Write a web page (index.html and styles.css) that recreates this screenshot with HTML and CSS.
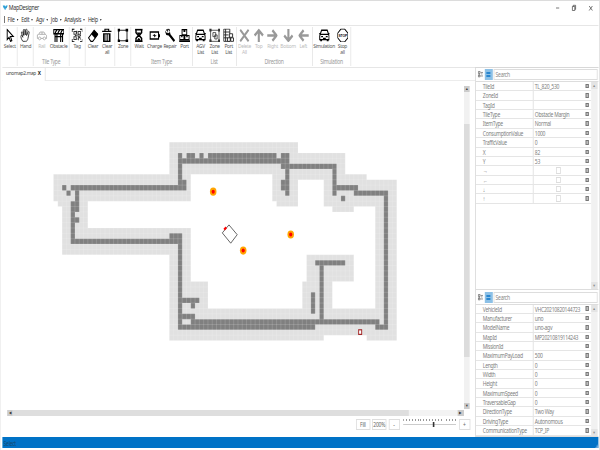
FILE: index.html
```html
<!DOCTYPE html>
<html lang="en">
<head>
<meta charset="utf-8">
<title>MapDesigner</title>
<link rel="stylesheet" href="styles.css">
</head>
<body>
<svg width="0" height="0" class="defs">
  <defs>
    <symbol id="select" viewBox="0 0 24 24"><path d="M6 2v17l4-4 3 7 3-1.300-3-7h6z" fill="#fff" stroke="#000" stroke-width="2"/></symbol>
    <symbol id="hand" viewBox="0 0 24 24"><path d="M7 22C4 19 2 14 3 12c1-1.500 3 1 4 3L4 7c0-2 2-2 3 0l2 5L8 3c0-2 3-2 3 0l1 8 1-9c1-2 3-1 3 1l-1 9 3-6c1-2 3-1 2.500 1L18 17c-1 3-2 5-5 5z" fill="#fff" stroke="#111" stroke-width="1.500"/></symbol>
    <symbol id="car" viewBox="0 0 24 24"><path d="M2 11l3-1 3-4h8l3 4 3 2v5H2zM6 10h13M12 6v4" fill="none" stroke="currentColor" stroke-width="1.700"/><circle cx="7" cy="17" r="2.500" fill="#fff" stroke="currentColor" stroke-width="1.500"/><circle cx="17" cy="17" r="2.500" fill="#fff" stroke="currentColor" stroke-width="1.500"/></symbol>
    <symbol id="obstacle" viewBox="0 0 24 24"><path d="M1 2h22v7H1zM4 9v14M8 9v14M16 9v14M20 9v14M4 14h16" fill="none" stroke="#000" stroke-width="2.400"/><path d="M4 8l4-6M10 8l4-6M16 8l4-6" stroke="#000" stroke-width="2.500"/></symbol>
    <symbol id="tag" viewBox="0 0 24 24"><path d="M1 6V1h5M18 1h5v5M23 18v5h-5M6 23H1v-5" fill="none" stroke="#000" stroke-width="2"/><path d="M5 5h5v5H5zM14 5h5v5h-5zM5 14h5v5H5zM12 11h2v3h4v2h-3v4M11 4v5M7 12h4M17 12h3M12 17v2M18 18h2" fill="none" stroke="#333" stroke-width="1.800"/></symbol>
    <symbol id="eraser" viewBox="0 0 24 24"><path d="M2 16L14 3l8 7-11 12H7z" fill="#fff" stroke="#000" stroke-width="2"/><path d="M8 10l6-7 8 7-6 7z" fill="#000"/></symbol>
    <symbol id="trash" viewBox="0 0 24 24"><path d="M2 5h20M8 5V1h8v4" fill="none" stroke="#000" stroke-width="2.400"/><path d="M4 8h16v15H4z"/><path d="M8.500 10v11M12 10v11M15.500 10v11" stroke="#fff" stroke-width="1.600"/></symbol>
    <symbol id="zone" viewBox="0 0 24 24"><path d="M3 3h18v18H3z" fill="none" stroke="#000" stroke-width="1.600"/><path d="M0 0h6v5H0zM18 0h6v5h-6zM0 19h6v5H0zM18 19h6v5h-6z"/></symbol>
    <symbol id="wait" viewBox="0 0 24 24"><path d="M4 2h16M4 22h16M6 2v5l5 5-5 5v5M18 2v5l-5 5 5 5v5" fill="none" stroke="#000" stroke-width="3"/><path d="M8 7h8l-4 5zM7 21l5-5 5 5z"/></symbol>
    <symbol id="charge" viewBox="0 0 24 24"><path d="M2 6h18v12H2z" fill="none" stroke="#000" stroke-width="2.400"/><path d="M21 10h3v5h-3zM7 12l6-3-1 2.500h4L10 16l1-3z"/></symbol>
    <symbol id="repair" viewBox="0 0 24 24"><path d="M2 3l4 1 2 4 4-2-1-5c-3-1-6 0-8 2zM7 1l5 5 1 4 10 10-3 3L9 12l-5-1-3-7 5 4 2-2z"/></symbol>
    <symbol id="port" viewBox="0 0 24 24"><path d="M7 2h10v9H7zM2 12h9v7H2zM13 12h9v7h-9z" fill="none" stroke="#000" stroke-width="2"/><path d="M10 2h4v4h-4zM5 12h3v3H5zM16 12h3v3h-3zM0 20h24v3H0z"/></symbol>
    <symbol id="agv" viewBox="0 0 24 24"><path d="M3 10l3-7h12l3 7 1 3v6H2v-6zM4 10h16" fill="none" stroke="#000" stroke-width="2.200"/><path d="M3 19h4v3H3zM17 19h4v3h-4zM5 13h4v2H5zM15 13h4v2h-4zM0 8h4v2H0zM20 8h4v2h-4zM9 16h6v2H9z"/></symbol>
    <symbol id="zonelist" viewBox="0 0 24 24"><path d="M3 3h18v19H3zM8 7h6v7H8zM12 11h5v7h-5z" fill="none" stroke="#222" stroke-width="1.400"/><path d="M0 0h5v5H0zM19 0h5v5h-5zM0 19h5v5H0zM19 19h5v5h-5z" fill="#333"/></symbol>
    <symbol id="portlist" viewBox="0 0 24 24"><path d="M2 1h13v21H2zM2 6h13M2 11h10M2 16h10M6 1v21" fill="none" stroke="#222" stroke-width="1.700"/><path d="M14 9h7v6h-7zM10 16h6v6h-6zM17 16h6v6h-6z" fill="#fff" stroke="#222" stroke-width="1.700"/></symbol>
    <symbol id="cross" viewBox="0 0 24 24"><path d="M3 2l18 20M21 2L3 22" stroke="#999" stroke-width="4"/></symbol>
    <symbol id="arrow" viewBox="0 0 24 24"><path d="M12 23V4M3 12l9-9 9 9" fill="none" stroke="#999" stroke-width="4.500"/></symbol>
    <symbol id="stop" viewBox="0 0 24 24"><path d="M8 1h8l7 7v8l-7 7H8l-7-7V8z" fill="#fff" stroke="#000" stroke-width="1.800"/><text x="12" y="15" text-anchor="middle" class="stop-text">STOP</text></symbol>
    <symbol id="tree" viewBox="0 0 12 12"><path d="M1 1h4v3H1zM1 7h4v3H1zM7 2.500h4M7 5h3M7 8.500h4M3 4v4" fill="none" stroke="#555" stroke-width="1.300"/></symbol>
  </defs>
</svg>
<div class="frame">
<div class="app">
  <header class="title">
    <svg class="logo" viewBox="0 0 14 12"><path d="M0 1h6l1 3 2-3h5l-3 6H9l-2 5-3-5H3z" fill="#2c9fd6"/></svg>
    <span class="grow">MapDesigner</span>
    <svg class="win" viewBox="0 0 60 12"><path d="M8 6h4M28.500 4.500h3v4h-3zM29.500 4.500v-1.200h3v4h-1M49.500 4l4 4.500M53.500 4l-4 4.500" fill="none" stroke="#444" stroke-width=".8"/></svg>
  </header>
  <nav class="menu"><i></i><span>File</span><span>Edit</span><span>Agv</span><span>Job</span><span>Analysis</span><span>Help</span></nav>
  <div class="ribbon" id="ribbon"></div>
  <div class="body">
    <main class="main">
      <div class="tabs"><div class="tab">unomap2.map <b>X</b></div></div>
      <div class="work">
        <svg class="map" viewBox="0 0 576.250 329" preserveAspectRatio="none">
          <g transform="translate(62.900 61.200) scale(5.362 5.362)">
            <path id="margin" fill="#e1e1e1"/>
            <path id="wall" fill="#808080"/>
            <path id="lattice" stroke="#fff" stroke-opacity=".18" stroke-width=".17"/>
          </g>
          <g fill="#ffa500"><circle cx="262.500" cy="110.700" r="4.100"/><circle cx="300" cy="169.600" r="4.100"/><circle cx="359.400" cy="153.500" r="4.100"/></g>
          <g fill="#f00"><circle cx="262.500" cy="110.700" r="2"/><circle cx="300" cy="169.600" r="2"/><circle cx="359.400" cy="153.500" r="2"/></g>
          <path d="M282.200 143.900l10.300 9.800-8.100 8.500-10.500-10.300z" fill="none" stroke="#444" stroke-width=".9"/>
          <path d="M276.200 148.700l2.600-2.400" stroke="#f00" stroke-width="2.500"/>
          <rect x="444.300" y="248.800" width="3.800" height="4.600" fill="#fff" stroke="#a52a2a" stroke-width="1.200"/>
        </svg>
        <div class="vbar"><i>▲</i><b></b><i>▼</i></div>
      </div>
      <div class="hbar"><i>◀</i><b></b><i>▶</i></div>
      <div class="zoom">
        <span class="btn">Fill</span><span class="btn">200%</span><span class="btn pale">-</span>
        <div class="slider"><div class="ticks"></div><div class="track"><i></i></div></div>
        <span class="btn">+</span>
      </div>
    </main>
    <aside class="side">
      <section class="panel top">
        <div class="find"><svg class="tree"><use href="#tree"/></svg><span class="sort"><i></i><i></i></span><span class="search">Search</span></div>
        <div class="props"><div class="rows" id="tile"></div><div class="pbar"><i>▲</i><i>▼</i></div></div>
      </section>
      <section class="panel bottom">
        <div class="find"><svg class="tree"><use href="#tree"/></svg><span class="sort"><i></i><i></i></span><span class="search">Search</span></div>
        <div class="props"><div class="rows" id="vehicle"></div><div class="pbar"><i>▲</i><i>▼</i></div></div>
      </section>
    </aside>
  </div>
  <footer class="status">Select<svg class="grip" viewBox="0 0 5 5"><path d="M4 0h1v5H0V4h2V2h2z" fill="#6aaade"/></svg></footer>
</div>
</div>
<script src="app.js"></script>
</body>
</html>
```
FILE: styles.css
```css
* { box-sizing: border-box; }
body { margin: 0; background: #fff; }
.defs { display: block; }
.frame { width: 600px; height: 450px; overflow: hidden; }
.app {
  width: 750px; height: 450px; transform: scaleX(.8); transform-origin: 0 0;
  display: flex; flex-direction: column; padding: 0 1.5px 2px 1.5px;
  border-top: 1px solid #dcdcdc; border-left: 1px solid #ececec; border-right: 1px solid #dedede;
  font-family: "Noto Sans", "Open Sans", sans-serif; font-size: 6.3px; letter-spacing: -.36px; line-height: 7px; color: #555;
}
i { font-style: normal; }
.grow { flex: 1; }
.title { height: 13px; flex: none; display: flex; align-items: center; color: #333; font-size: 6.6px; padding-left: 0; }
.logo { width: 7px; height: 5.5px; margin: 0 1.5px 0 0; }
.win { width: 60px; height: 12px; flex: none; margin-right: 1px; }
.menu { height: 12px; flex: none; display: flex; align-items: center; padding-left: 2px; color: #333; border-bottom: 1px solid #e6e6e6; }
.menu > i { width: 1px; height: 7px; background: #555; margin-right: 4px; }
.menu span { display: flex; align-items: center; margin-right: 3.5px; }
.menu span::after { content: ""; border: 1.5px solid transparent; border-top: 2px solid #333; border-bottom: 0; margin-left: 3px; }
.ribbon { height: 42px; flex: none; display: flex; border-bottom: 1px solid #e6e6e6; padding: 1px 0 1px; }
.group { flex: none; border-right: 1px solid #e4e4e4; display: flex; flex-direction: column; }
.items { flex: 1; display: flex; }
.item { flex: none; display: flex; flex-direction: column; align-items: center; text-align: center; line-height: 6px; white-space: pre; color: #555; font-size: 6.1px; }
.item svg { width: 15px; height: 15px; padding: .5px; margin: .5px 0 0; color: #000; flex: none; }
.item.off { color: #bbb; }
.item.off svg { color: #aaa; }
.stop-text { font: bold 7px "Liberation Sans", sans-serif; letter-spacing: 0; }
.right { transform: rotate(90deg); }
.down { transform: rotate(180deg); }
.left { transform: rotate(-90deg); }
.caption { text-align: center; color: #999; height: 7px; line-height: 6px; }
.body { flex: 1; min-height: 0; display: flex; }
.main { width: 591px; flex: none; display: flex; flex-direction: column; }
.tabs { height: 13px; flex: none; border-bottom: 1px solid #ececec; display: flex; }
.tab { width: 54px; height: 13px; background: #fff; border-right: 1px solid #e2e2e2; padding: 2px 0 0 5px; white-space: nowrap; color: #444; font-size: 6px; }
.tab b { color: #222; margin-left: 1px; font-size: 6px; }
.work { height: 329px; flex: none; display: flex; }
.map { width: 576.25px; height: 329px; flex: none; display: block; margin-left: 1px; }
.vbar { width: 7.5px; height: 323px; margin-top: 5px; background: #f1f1f1; display: flex; flex-direction: column; justify-content: space-between; letter-spacing: 0; }
.vbar i, .hbar i { width: 7.5px; height: 6px; background: #ccc; font-size: 4px; line-height: 6px; text-align: center; color: #333; flex: none; }
.vbar b { height: 233px; background: #dcdcdc; margin-bottom: 15px; }
.hbar { width: 571px; height: 6px; margin-left: 6px; background: #f3f3f3; display: flex; flex: none; letter-spacing: 0; }
.hbar b { width: 495px; background: #dedede; margin-right: auto; }
.zoom { display: flex; align-items: center; justify-content: flex-end; height: 13px; margin-top: 1.5px; padding-right: 6px; gap: 2.5px; }
.btn { width: 18px; height: 11px; border: 1px solid #ddd; text-align: center; line-height: 9px; color: #666; flex: none; }
.btn:nth-child(3), .btn:last-child { width: 14px; }
.slider { width: 66px; margin: 0 1px 0 2px; height: 10px; }
.ticks { height: 2px; background: repeating-linear-gradient(90deg, #999 0 1.2px, transparent 1.2px 3.6px); }
.track { height: 1px; background: #ccc; margin-top: 3px; display: flex; justify-content: center; align-items: center; }
.track i { width: 2.5px; height: 5px; background: #333; margin-left: 10px; flex: none; }
.side { flex: 1; min-width: 0; display: flex; flex-direction: column; border-left: 1px solid #d8d8d8; border-top: 1px solid #d8d8d8; margin-top: -1px; }
.panel { display: flex; flex-direction: column; }
.top { height: 222px; flex: none; border-bottom: 1px solid #ddd; }
.bottom { flex: 1; border-bottom: 1px solid #ddd; padding-top: .5px; }
.find { height: 14px; flex: none; display: flex; align-items: center; border-bottom: 1px solid #ddd; padding: 1px 1px 1px 2.5px; }
.tree { width: 7.5px; height: 7px; flex: none; margin-right: 1px; }
.sort { width: 10px; height: 11px; background: #8cc0e6; display: flex; flex-direction: column; align-items: center; justify-content: center; gap: 1px; margin-right: 1.5px; flex: none; }
.sort i { width: 5.5px; height: 2px; background: #2886cf; }
.search { flex: 1; height: 11px; border: 1px solid #ddd; line-height: 9px; padding-left: 1.5px; color: #888; }
.props { flex: 1; display: flex; min-height: 0; }
.rows { flex: 1; min-width: 0; }
.row { height: 9.37px; display: flex; align-items: center; border-bottom: 1px solid #e5e5e5; color: #808080; white-space: nowrap; }
.row span { width: 72px; height: 100%; line-height: 9.2px; padding-left: 9px; border-right: 1px solid #ddd; flex: none; }
.row em { flex: 1; height: 100%; font-style: normal; padding-left: 2px; line-height: 9.2px; }
.row u { width: 6.5px; height: 6.5px; border: 1px solid #ddd; display: block; margin: 1px auto 0; transform: translateX(-2px); }
.row > i { width: 4.5px; height: 4.4px; border: 1.3px solid #777; background: #bbb; margin-right: 3px; flex: none; }
.pbar { width: 7.5px; margin-right: 1px; background: #f1f1f1; display: flex; flex-direction: column; justify-content: space-between; letter-spacing: 0; }
.pbar i { height: 7px; background: #e4e4e4; font-size: 4px; text-align: center; color: #888; }
.status { height: 11px; flex: none; background: #0072c6; color: #174b73; display: flex; justify-content: space-between; align-items: flex-end; padding-left: 2px; line-height: 9px; }
.grip { width: 4px; height: 4px; }
```
FILE: app.js
```js
const $ = id => document.getElementById(id);

// Ribbon groups: width, left inset, caption, items [icon, label, width, class, icon class]
const groups = [
  [19.4, 1, "", [["select", "Select", 17.4]]],
  [20, 0, "", [["hand", "Hand", 20]]],
  [45, 0, "Tile Type", [["car", "Rail", 20.5, "off"], ["obstacle", "Obstacle", 21.5]]],
  [20, 0, "", [["tag", "Tag", 19]]],
  [37.5, 0, "", [["eraser", "Clear", 18.5], ["trash", "Clear\nall", 17]]],
  [20, 0, "", [["zone", "Zone", 19]]],
  [76.2, 0, "Item Type", [["wait", "Wait", 19], ["charge", "Charge", 19.5], ["repair", "Repair", 19], ["port", "Port", 17.5]]],
  [55, 1.5, "List", [["agv", "AGV\nList", 17.5], ["zonelist", "Zone\nList", 17.5], ["portlist", "Port\nList", 17.5]]],
  [95, 1, "Direction", [["cross", "Delete\nAll", 18, "off"], ["arrow", "Top", 17.5, "off"], ["arrow", "Right", 17.5, "off", "right"], ["arrow", "Bottom", 21, "off", "down"], ["arrow", "Left", 17, "off", "left"]]],
  [48.8, 0, "Simulation", [["agv", "Simulation", 29], ["stop", "Stop\nall", 17]]]
];
$("ribbon").innerHTML = groups.map(([w, inset, cap, items]) =>
  `<div class="group" style="width:${w}px"><div class="items" style="padding-left:${inset}px">` +
  items.map(([icon, label, iw, cls = "", turn = ""]) =>
    `<div class="item ${cls}" style="width:${iw}px"><svg class="${turn}"><use href="#${icon}"/></svg>${label}</div>`).join("") +
  `</div><div class="caption">${cap}</div></div>`).join("");

// Map tiles as [left, top, right, bottom] in grid cells
const margin = [
  [27,0,57,6],[51,2,68,7],[51,6,57,11],[52,11,57,12],[0,6,32,11],[27,3,30,6],[1,11,8,12],[2,12,8,16],[2,16,32,21],
  [27,21,32,26],[27,26,36,31],[27,31,63,37],[63,31,80,36],[73,36,80,37],[58,26,65,31],[59,21,70,26],
  [63,6,73,7],[63,7,80,12],[65,12,70,13],[75,12,80,36]
];
const wall = [
  [2,8,3,9],[3,9,4,10],[4,8,31,9],[5,9,6,11],[4,11,6,13],[4,13,5,18],[5,14,6,15],[4,18,30,19],[27,17,30,18],
  [29,7,31,8],[29,2,30,7],[31,2,33,3],[34,2,35,3],[36,2,52,3],[53,2,55,3],[30,3,55,4],[53,4,66,5],[54,5,55,10],
  [53,7,54,9],[65,5,66,10],[66,8,71,9],[70,9,78,10],[67,10,68,11],[77,10,78,35],[75,34,77,35],
  [29,19,30,35],[30,29,34,30],[32,30,33,31],[30,32,33,33],[32,33,76,34],[30,34,61,35],[60,28,61,32],
  [62,23,63,33],[61,22,68,23]
];
const toPath = list => list.map(([a, b, c, d]) => `M${a} ${b}H${c}V${d}H${a}z`).join("");
$("margin").setAttribute("d", toPath(margin));
$("wall").setAttribute("d", toPath(wall));
let lines = "";
for (let c = 1; c < 80; c++) lines += `M${c} 0V37`;
for (let r = 1; r < 37; r++) lines += `M0 ${r}H80`;
$("lattice").setAttribute("d", lines);

const box = "<u></u>";
const rows = list => list.map(([k, v]) => `<div class="row"><span>${k}</span><em>${v}</em><i></i></div>`).join("");
$("tile").innerHTML = rows([
  ["TileId", "TL_820_530"], ["ZoneId", ""], ["TagId", ""], ["TileType", "Obstacle Margin"], ["ItemType", "Normal"],
  ["ConsumptionValue", "1000"], ["TrafficValue", "0"], ["X", "82"], ["Y", "53"],
  ["→", box], ["←", box], ["↓", box], ["↑", box]
]);
$("vehicle").innerHTML = rows([
  ["VehicleId", "VHC20210820144723"], ["Manufacturer", "uno"], ["ModelName", "uno-agv"], ["MapId", "MP20210819114243"],
  ["MissionId", ""], ["MaximumPayLoad", "500"], ["Length", "0"], ["Width", "0"], ["Height", "0"], ["MaximumSpeed", "0"],
  ["TraversableGap", "0"], ["DirectionType", "Two Way"], ["DrivingType", "Autonomous"], ["CommunicationType", "TCP_IP"]
]);
```
